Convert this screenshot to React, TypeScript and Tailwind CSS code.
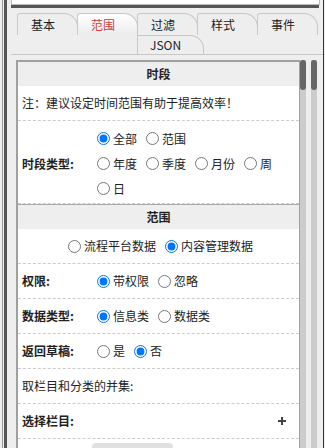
import React from 'react';

const FONT = "font-['Noto_Sans_CJK_SC','Noto_Sans',sans-serif]";

function Tab({ label, active }: { label: string; active?: boolean }) {
  return (
    <div
      className={
        active
          ? 'w-[61px] -ml-px first:ml-0 h-[22px] pl-[13px] flex items-center border border-b-0 border-[#c8c8c8] rounded-tl-[3px] rounded-tr-[14px] bg-linear-to-b from-white to-[#ececec] text-[#cc3d3d]'
          : 'w-[61px] -ml-px first:ml-0 h-[22px] pl-[13px] flex items-center border border-b-0 border-[#c8c8c8] rounded-tl-[3px] rounded-tr-[14px] bg-[#eeeeee] text-[#222]'
      }
    >
      {label}
    </div>
  );
}

function Opt({ label, name, checked }: { label: string; name: string; checked?: boolean }) {
  return (
    <label className="flex items-center gap-[3px] mr-[9px] h-[25px]">
      <input type="radio" name={name} defaultChecked={checked} className="m-0 w-[13px] h-[13px]" />
      <span>{label}</span>
    </label>
  );
}

function Row({ label, children, bold = true }: { label: string; children?: React.ReactNode; bold?: boolean }) {
  return (
    <div className="shrink-0 h-[35px] pl-[4px] pr-[13px] flex items-center border-b border-dashed border-[#cccccc]">
      <div className={bold ? 'w-[75px] shrink-0 font-bold' : 'shrink-0'}>{label}</div>
      {children}
    </div>
  );
}

function Scrollbar() {
  return (
    <div className="w-[6px] h-full bg-[#cccccc]">
      <div className="w-[6px] h-[30px] rounded-full bg-[#666666]" />
    </div>
  );
}

export default function App() {
  return (
    <div className={`w-[325px] h-[448px] bg-[#eeeeee] flex overflow-hidden text-[12px] text-[#222] ${FONT}`}>
      {/* left frame */}
      <div className="flex shrink-0">
        <div className="w-[2px]" />
        <div className="w-[1px] bg-[#9a9a9a]" />
        <div className="w-[1px]" />
        <div className="w-[3px] bg-[#555555]" />
      </div>

      {/* main column */}
      <div className="w-[316px] flex flex-col">
        <div className="ml-[4px] w-[309px] h-[5px] bg-white border border-t-0 border-[#bbbbbb]" />
        <div className="ml-[4px] w-[308px] h-[3px] bg-[#555555]" />

        {/* tabs */}
        <div className="mt-[5px] pl-[10px] flex">
          <Tab label="基本" />
          <Tab label="范围" active />
          <Tab label="过滤" />
          <Tab label="样式" />
          <Tab label="事件" />
        </div>
        <div className="ml-[4px] h-[20px] flex border-b border-[#c8c8c8]">
          <div className="ml-[126px] h-[19px] pl-[12px] pr-[22px] flex items-center border border-b-0 border-[#c8c8c8] rounded-tr-[14px] bg-[#eeeeee]">
            JSON
          </div>
        </div>

        {/* body */}
        <div className="mt-[5px] flex-1 flex min-h-0">
          <div className="ml-[9px] w-[284px] bg-white border-l-2 border-t-2 border-r border-[#a0a0a0] flex flex-col overflow-hidden">
            <div className="shrink-0 h-[24px] bg-[#eeeeee] flex items-center justify-center font-bold">时段</div>
            <Row label="注：建议设定时间范围有助于提高效率！" bold={false} />
            <div className="shrink-0 h-[83px] pl-[4px] pt-[3px] flex items-center border-b border-dashed border-[#cccccc]">
              <div className="w-[75px] shrink-0 font-bold">时段类型:</div>
              <div className="flex flex-col">
                <div className="flex">
                  <Opt name="range" label="全部" checked />
                  <Opt name="range" label="范围" />
                </div>
                <div className="flex flex-wrap w-[202px]">
                  <Opt name="period" label="年度" />
                  <Opt name="period" label="季度" />
                  <Opt name="period" label="月份" />
                  <Opt name="period" label="周" />
                  <Opt name="period" label="日" />
                </div>
              </div>
            </div>

            <div className="shrink-0 border-t border-[#a8a8a8] h-[25px] bg-[#eeeeee] flex items-center justify-center font-bold">范围</div>
            <div className="shrink-0 h-[35px] pl-[4px] flex items-center justify-center border-b border-dashed border-[#cccccc]">
              <div className="flex pl-[9px]">
                <Opt name="src" label="流程平台数据" />
                <Opt name="src" label="内容管理数据" checked />
              </div>
            </div>
            <Row label="权限:">
              <div className="flex">
                <Opt name="perm" label="带权限" checked />
                <Opt name="perm" label="忽略" />
              </div>
            </Row>
            <Row label="数据类型:">
              <div className="flex">
                <Opt name="dtype" label="信息类" checked />
                <Opt name="dtype" label="数据类" />
              </div>
            </Row>
            <Row label="返回草稿:">
              <div className="flex">
                <Opt name="draft" label="是" />
                <Opt name="draft" label="否" checked />
              </div>
            </Row>
            <Row label="取栏目和分类的并集:" bold={false} />
            <Row label="选择栏目:">
              <div className="flex-1 flex justify-end">
                <svg width="8" height="8" viewBox="0 0 8 8">
                  <rect x="3" y="0" width="2" height="8" fill="#444" />
                  <rect x="0" y="3" width="8" height="2" fill="#444" />
                </svg>
              </div>
            </Row>
            <div className="shrink-0 mt-[4px] ml-[74px] w-[81px] h-[24px] rounded-[4px] bg-[#e0e0e0]" />
          </div>
          <Scrollbar />
          <div className="w-[5px]" />
          <Scrollbar />
        </div>
      </div>

      {/* right frame */}
      <div className="w-[1px] bg-[#333333]" />
      <div className="w-[1px]" />
    </div>
  );
}
